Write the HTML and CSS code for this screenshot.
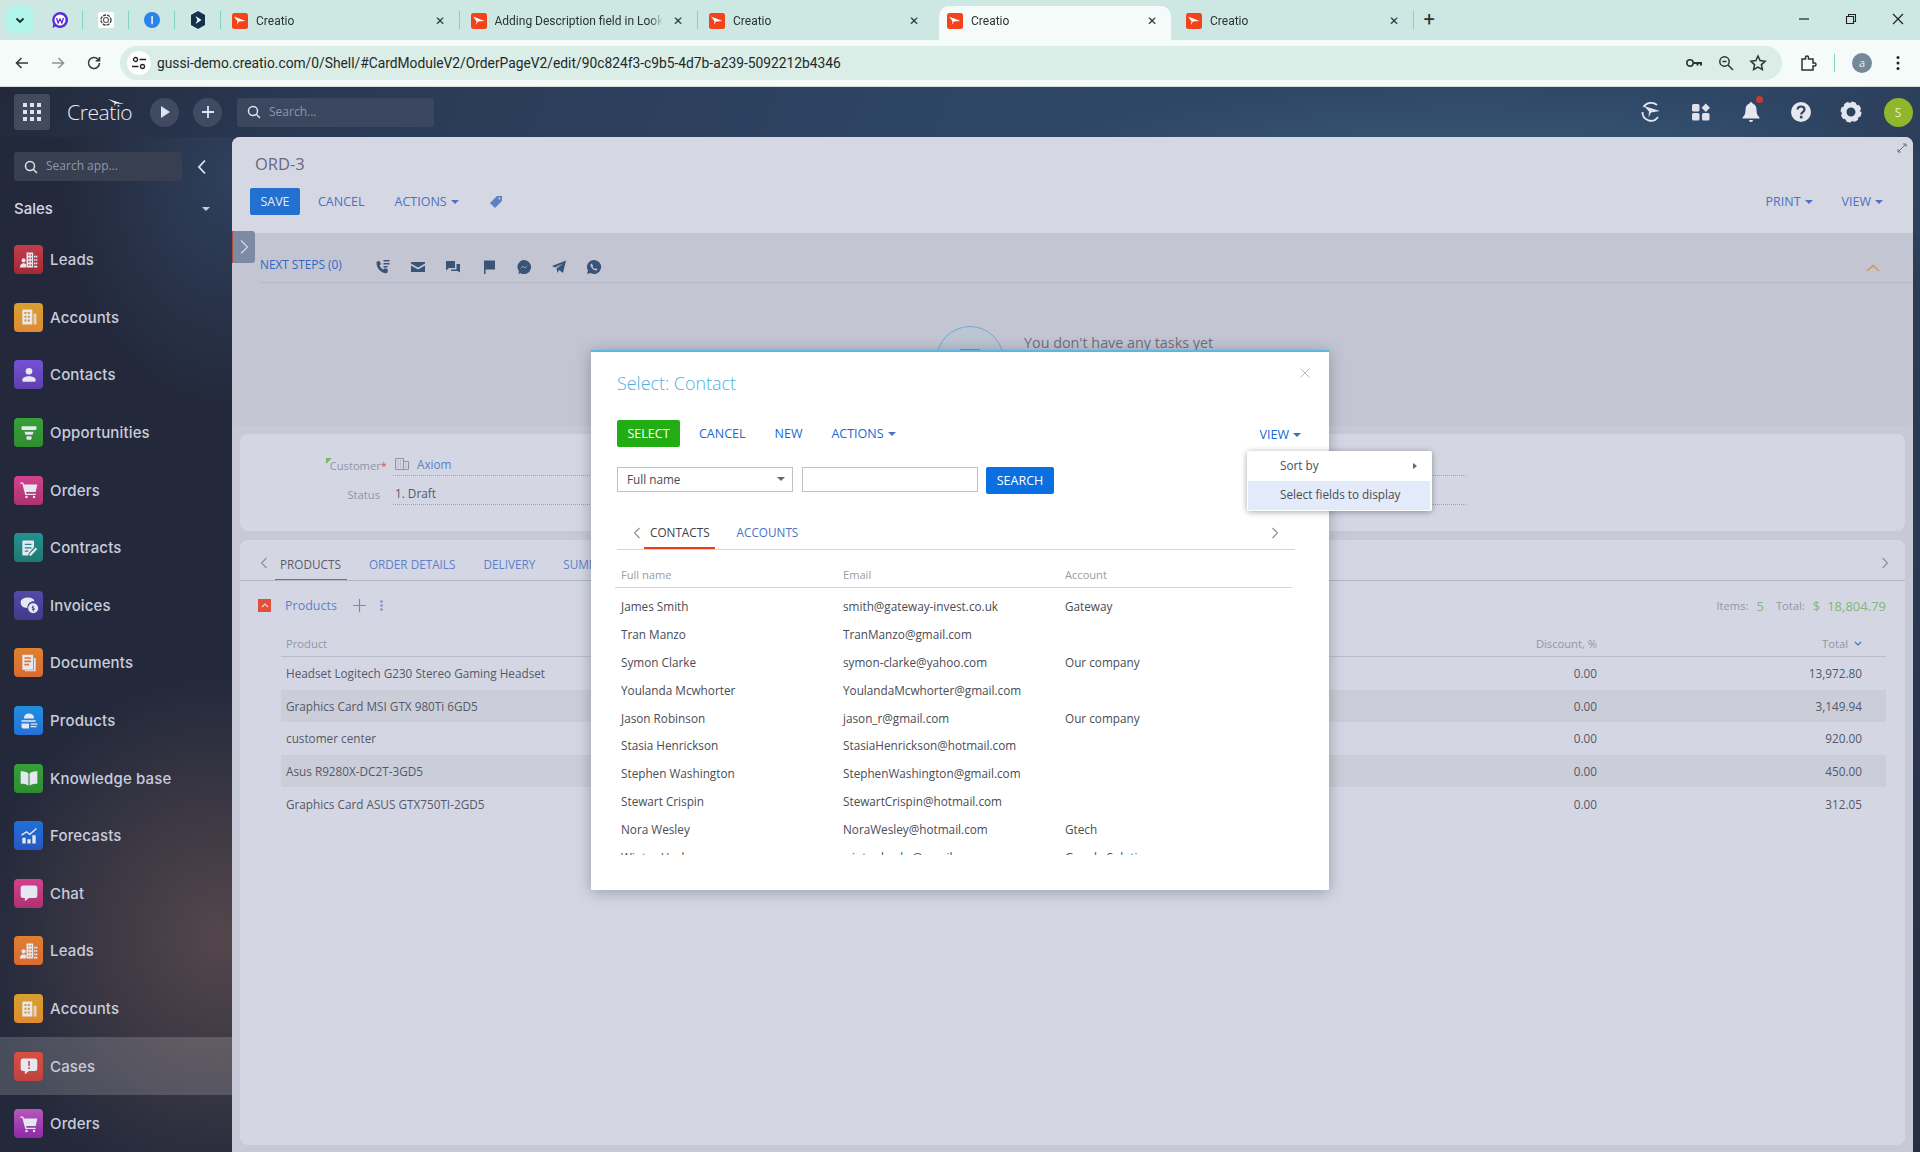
FILE: index.html
```html
<!DOCTYPE html>
<html lang="en">

<head>
  <meta charset="UTF-8">
  <title>Creatio</title>
  <link rel="stylesheet" href="styles.css">
</head>

<body>

  <svg class="sprite" xmlns="http://www.w3.org/2000/svg">
    <symbol id="fav" viewBox="0 0 16 16">
      <rect width="16" height="16" rx="2.5" fill="#f4421a"/>
      <path d="M2 3.5 13.5 8 7 8.6l-2.3 3.4L5.6 8.4z" fill="#fff"/>
    </symbol>
    <symbol id="i-lead" viewBox="0 0 24 24">
      <path fill-rule="evenodd" d="M9 3h8v18H9zM11 5v2h1.5V5zm3 0v2h1.5V5zM11 9v2h1.5V9zm3 0v2h1.5V9zM11 13v2h1.5v-2zm3 0v2h1.5v-2zM11 17v2h1.5v-2zm3 0v2h1.5v-2z"/>
      <path d="M18 7h1.500v2H18zm2 0h2v2h-2zm-2 4h1.500v2H18zm2 0h2v2h-2zm-2 4h1.500v2H18zm2 0h2v2h-2zm-2 4h4v2h-4z"/>
      <circle cx="5.500" cy="12.500" r="2.500"/>
      <path d="M1 21c0-3 2-5 4.500-5S10 18 8 21z"/>
    </symbol>
    <symbol id="i-acc" viewBox="0 0 24 24">
      <path fill-rule="evenodd" d="M4 4a1 1 0 0 1 1-1h10a1 1 0 0 1 1 1v17H4zM6.500 6v2.500H9V6zm4 0v2.500H13V6zm-4 4.500V13H9v-2.500zm4 0V13H13v-2.500zm-4 4.500v2.500H9V15zm4 0v2.500H13V15z"/>
      <path d="M17.500 8H21v13h-3.500z" opacity=".75"/>
    </symbol>
    <symbol id="i-contact" viewBox="0 0 24 24">
      <circle cx="12" cy="7.500" r="4"/>
      <path d="M4 18c0-3 4-4.500 8-4.500s8 1.500 8 4.500v1a1 1 0 0 1-1 1H5a1 1 0 0 1-1-1z"/>
    </symbol>
    <symbol id="i-funnel" viewBox="0 0 24 24">
      <path d="M3 5a1 1 0 0 1 1-1h16a1 1 0 0 1 1 1v1.500a2 2 0 0 1-2 2H5a2 2 0 0 1-2-2zM6.500 10.500h11l-1.300 3.700H7.800zM9 16h6v3a1 1 0 0 1-1 1h-4a1 1 0 0 1-1-1z"/>
    </symbol>
    <symbol id="i-cart" viewBox="0 0 24 24">
      <path d="M1.500 3H5l1 2.500h16L20 14.500H8.500l.5 2H20V18H7.500L4 4.500H1.500z"/>
      <circle cx="9" cy="20.500" r="1.500"/>
      <circle cx="18" cy="20.500" r="1.500"/>
    </symbol>
    <symbol id="i-contract" viewBox="0 0 24 24">
      <path fill-rule="evenodd" d="M5 3h12a1 1 0 0 1 1 1v7l-6 7-1 3H5a1 1 0 0 1-1-1V4a1 1 0 0 1 1-1zm2 4v1.500h8V7zm0 4v1.500h8V11zm0 4v1.500h4V15z"/>
      <path d="m20 11.500 2 1.800-7.500 8H12.500v-2z"/>
    </symbol>
    <symbol id="i-invoice" viewBox="0 0 24 24">
      <path d="M11 3c4 0 7 1.500 7.500 4.500-4.500-.5-8.500 2.500-8.500 8-4.500 0-8-2-8-6.500C2 5 6 3 11 3z"/>
      <path fill-rule="evenodd" d="M17 10a6 6 0 1 1 0 12 6 6 0 0 1 0-12zm-.8 2.500v1.200c-1.200.3-1.500 2.300.3 2.600 1.300.3 1 1.100-.8.700v1.200l1.300.2v1.100h1V18c1.200-.4 1.300-2.300-.4-2.600-1.200-.3-1-1 .6-.6v-1.100l-1-.2v-1z"/>
    </symbol>
    <symbol id="i-doc" viewBox="0 0 24 24">
      <path fill-rule="evenodd" d="M4 2h13v18H4zM6.500 5v2h8V5zm0 4v2h8V9zm0 4v2H12v-2z"/>
      <path d="M18 6h2v16H7v-1.200h11z"/>
    </symbol>
    <symbol id="i-product" viewBox="0 0 24 24">
      <path d="M6 8c0-3 2.500-5 6-5s6 2 6 5v1H6zM3 11h17v2H3zM3 15h9v6H5a2 2 0 0 1-2-2zM14 15h8v1.500h-8zM14 18h7v1.500h-7z"/>
    </symbol>
    <symbol id="i-book" viewBox="0 0 24 24">
      <path d="M2 4c3.500 0 7 .5 9.300 2.500V21C9 19.500 5.500 19 2 19zM22 4c-3.500 0-7 .5-9.300 2.500V21C15 19.500 18.500 19 22 19z"/>
    </symbol>
    <symbol id="i-forecast" viewBox="0 0 24 24">
      <path d="M4 14h4v7H4zM10 16h4v5h-4zM16 11h4v10h-4z"/>
      <path d="m3 11 6-4 4 3 8-7" fill="none" stroke="currentColor" stroke-width="1.600"/>
    </symbol>
    <symbol id="i-chat" viewBox="0 0 24 24">
      <path d="M5 3h14a3 3 0 0 1 3 3v9a3 3 0 0 1-3 3h-7l-5 4v-4H5a3 3 0 0 1-3-3V6a3 3 0 0 1 3-3z"/>
    </symbol>
    <symbol id="i-case" viewBox="0 0 24 24">
      <path d="M5 3h14a3 3 0 0 1 3 3v9a3 3 0 0 1-3 3h-7l-5 4v-4H5a3 3 0 0 1-3-3V6a3 3 0 0 1 3-3z"/>
      <path d="M11 6h2v6h-2zM11 13.500h2v2h-2z" fill="#d34a40"/>
    </symbol>
  </svg>

  <div class="browser">
    <div class="tabstrip">
      <div class="tab-menu">
        <svg width="12" height="12" viewBox="0 0 12 12"><path d="m2.500 4.500 3.500 3.500 3.500-3.500" fill="none" stroke="#1d2b2a" stroke-width="1.800"/></svg>
      </div>
      <div class="pin">
        <svg width="18" height="18" viewBox="0 0 18 18"><path d="M9 1a8 8 0 1 1-4.500 14.600L1.500 17l.8-4A8 8 0 0 1 9 1z" fill="#5b2bd8"/><circle cx="9" cy="9" r="5.500" fill="#fff"/><path d="m5.500 7 1.600 5 1.900-4 1.900 4 1.600-5" fill="none" stroke="#5b2bd8" stroke-width="1.300"/></svg>
      </div>
      <div class="pin">
        <svg width="16" height="16" viewBox="0 0 16 16"><rect width="16" height="16" rx="2" fill="#fff"/><circle cx="8" cy="8" r="5" fill="none" stroke="#444" stroke-width="1.400" stroke-dasharray="3 1"/><circle cx="8" cy="8" r="2.500" fill="none" stroke="#555" stroke-width="1.100"/></svg>
      </div>
      <div class="pin">
        <svg width="16" height="16" viewBox="0 0 16 16"><circle cx="8" cy="8" r="8" fill="#2a83e8"/><path d="M6.500 5 8.800 3.800v8.400H7.400V5.500z" fill="#fff"/></svg>
      </div>
      <div class="pin">
        <svg width="16" height="18" viewBox="0 0 16 18"><path d="M8 0 15 4v10l-7 4-7-4V4z" fill="#14304d"/><path d="m5.500 5 6 4-6 4 2-4z" fill="#fff"/></svg>
      </div>
      <div class="tab"><svg class="fav"><use href="#fav"/></svg><span class="tab-title">Creatio</span><span class="tab-x">&#x2715;</span></div>
      <div class="tab"><svg class="fav"><use href="#fav"/></svg><span class="tab-title">Adding Description field in Look</span><span class="tab-x">&#x2715;</span></div>
      <div class="tab no-sep"><svg class="fav"><use href="#fav"/></svg><span class="tab-title">Creatio</span><span class="tab-x">&#x2715;</span></div>
      <div class="tab active"><svg class="fav"><use href="#fav"/></svg><span class="tab-title">Creatio</span><span class="tab-x">&#x2715;</span></div>
      <div class="tab"><svg class="fav"><use href="#fav"/></svg><span class="tab-title">Creatio</span><span class="tab-x">&#x2715;</span></div>
      <div class="new-tab">+</div>
      <div class="win-controls">
        <svg width="12" height="12" viewBox="0 0 12 12"><path d="M1 6h10" stroke="#222" stroke-width="1.200"/></svg>
        <svg width="12" height="12" viewBox="0 0 12 12"><path d="M1.500 3.500h7v7h-7zM3.500 3.500v-2h7v7h-2" fill="none" stroke="#222" stroke-width="1.100"/></svg>
        <svg width="12" height="12" viewBox="0 0 12 12"><path d="m1 1 10 10M11 1 1 11" stroke="#222" stroke-width="1.200"/></svg>
      </div>
    </div>
    <div class="toolbar">
      <svg class="nav-btn" width="16" height="16" viewBox="0 0 16 16"><path d="M14 8H3M7.500 3 2.500 8l5 5" fill="none" stroke="#2f3d3b" stroke-width="1.600"/></svg>
      <svg class="nav-btn" width="16" height="16" viewBox="0 0 16 16"><path d="M2 8h11M8.500 3l5 5-5 5" fill="none" stroke="#8a9694" stroke-width="1.600"/></svg>
      <svg class="nav-btn" width="16" height="16" viewBox="0 0 16 16"><path d="M13.500 8a5.500 5.500 0 1 1-1.600-3.900L13.500 5.500M13.500 2v3.800H9.700" fill="none" stroke="#2f3d3b" stroke-width="1.600"/></svg>
      <div class="address">
        <span class="site-btn">
          <svg width="16" height="16" viewBox="0 0 16 16"><circle cx="4.500" cy="4.500" r="2" fill="none" stroke="#222" stroke-width="1.300"/><path d="M8.500 4.500H15M1 11.500h6.500" stroke="#222" stroke-width="1.300"/><circle cx="11.500" cy="11.500" r="2" fill="none" stroke="#222" stroke-width="1.300"/></svg>
        </span>
        <span class="url">gussi-demo.creatio.com/0/Shell/#CardModuleV2/OrderPageV2/edit/90c824f3-c9b5-4d7b-a239-5092212b4346</span>
        <span class="addr-icons">
          <svg width="18" height="18" viewBox="0 0 18 18"><circle cx="5" cy="9" r="3.200" fill="none" stroke="#2a3432" stroke-width="1.600"/><path d="M8.500 8H17v3.500h-2V10h-1.500v1.500h-2V10H8.500z" fill="#2a3432"/></svg>
          <svg width="18" height="18" viewBox="0 0 18 18"><circle cx="7.500" cy="7.500" r="4.700" fill="none" stroke="#2a3432" stroke-width="1.500"/><path d="m11 11 5 5M5.500 7.500h4" stroke="#2a3432" stroke-width="1.500"/></svg>
          <svg width="18" height="18" viewBox="0 0 18 18"><path d="m9 2 2.100 4.600 5 .6-3.700 3.400 1 5L9 13.100l-4.400 2.500 1-5L1.900 7.200l5-.6z" fill="none" stroke="#2a3432" stroke-width="1.500"/></svg>
        </span>
      </div>
      <svg class="ext" width="18" height="18" viewBox="0 0 18 18"><path d="M3 5h3.500V3.500a1.500 1.500 0 0 1 3 0V5H14v4h1.500a1.500 1.500 0 0 1 0 3H14v4H3z" fill="none" stroke="#2a3432" stroke-width="1.500"/></svg>
      <span class="tool-sep"></span>
      <span class="profile">a</span>
      <svg class="dots" width="4" height="16" viewBox="0 0 4 16"><circle cx="2" cy="2.500" r="1.500" fill="#222"/><circle cx="2" cy="8" r="1.500" fill="#222"/><circle cx="2" cy="13.500" r="1.500" fill="#222"/></svg>
    </div>
  </div>

  <div class="app">
    <header class="topbar">
      <div class="grid-btn">
        <svg width="18" height="18" viewBox="0 0 18 18" fill="#dfe2ec"><rect x="0" y="0" width="4" height="4"/><rect x="7" y="0" width="4" height="4"/><rect x="14" y="0" width="4" height="4"/><rect x="0" y="7" width="4" height="4"/><rect x="7" y="7" width="4" height="4"/><rect x="14" y="7" width="4" height="4"/><rect x="0" y="14" width="4" height="4"/><rect x="7" y="14" width="4" height="4"/><rect x="14" y="14" width="4" height="4"/></svg>
      </div>
      <div class="logo">Creatio<svg class="swoosh" width="16" height="7" viewBox="0 0 16 7"><path d="M0 0 16 5 8 4.600 6 7 6.500 4z" fill="#eceef4"/></svg></div>
      <div class="round-btn play"><svg width="12" height="14" viewBox="0 0 12 14"><path d="M2 1v12l9-6z" fill="#dfe2ec"/></svg></div>
      <div class="round-btn plus"><svg width="14" height="14" viewBox="0 0 14 14"><path d="M7 1v12M1 7h12" stroke="#dfe2ec" stroke-width="1.800"/></svg></div>
      <div class="search-box top-search">
        <svg width="14" height="14" viewBox="0 0 14 14"><circle cx="6" cy="6" r="4.500" fill="none" stroke="#dfe2ec" stroke-width="1.500"/><path d="m9.500 9.500 3.500 3.500" stroke="#dfe2ec" stroke-width="1.500"/></svg>
        <span>Search...</span>
      </div>
      <div class="top-icons">
        <svg width="22" height="22" viewBox="0 0 22 22"><path d="M3.500 6A9 9 0 0 1 17 4M2.500 11a8.500 8.500 0 0 0 15.500 5" fill="none" stroke="#e3e5ee" stroke-width="1.800"/><path d="M4 5l16 5-9 1.500-2.500 5L9 10.500z" fill="#e3e5ee"/></svg>
        <svg width="20" height="20" viewBox="0 0 20 20" fill="#dfe2ec"><rect x="1" y="2" width="7.500" height="7.500" rx="1.500"/><rect x="1" y="11" width="7.500" height="7.500" rx="1.500"/><rect x="11" y="11" width="7.500" height="7.500" rx="1.500"/><path d="m14.800 1.500 4.200 4.200-4.200 4.200-4.200-4.200z"/></svg>
        <span class="bell">
          <svg width="20" height="22" viewBox="0 0 20 22" fill="#e6e8f0"><path d="M10 1a1.500 1.500 0 0 1 1.500 1.500C14.500 3.500 15.500 6 15.500 9c0 4 1 5.500 3 7.500v1h-17v-1c2-2 3-3.500 3-7.500 0-3 1-5.500 4-6.500A1.500 1.500 0 0 1 10 1z"/><path d="M8 19h4a2 2 0 0 1-4 0z"/></svg>
          <i class="bell-dot"></i>
        </span>
        <svg width="22" height="22" viewBox="0 0 22 22"><circle cx="11" cy="11" r="10" fill="#e6e8f0"/><path d="M7.600 8.500C7.800 6.400 9.300 5.500 11 5.500c2 0 3.500 1.200 3.500 3 0 2.700-3.300 2.500-3.300 5" fill="none" stroke="#2f4560" stroke-width="2.200"/><rect x="9.900" y="14.800" width="2.600" height="2.600" fill="#2f4560"/></svg>
        <svg width="22" height="22" viewBox="0 0 22 22"><circle cx="11" cy="11" r="7" fill="none" stroke="#e3e5ee" stroke-width="5"/><circle cx="11" cy="11" r="9" fill="none" stroke="#e3e5ee" stroke-width="3" stroke-dasharray="4.500 2.570"/></svg>
        <span class="user-badge">S</span>
      </div>
    </header>

    <aside class="sidebar">
      <div class="side-search">
        <div class="search-box">
          <svg width="14" height="14" viewBox="0 0 14 14"><circle cx="6" cy="6" r="4.500" fill="none" stroke="#dfe2ec" stroke-width="1.500"/><path d="m9.500 9.500 3.500 3.500" stroke="#dfe2ec" stroke-width="1.500"/></svg>
          <span>Search app...</span>
        </div>
        <svg width="10" height="16" viewBox="0 0 10 16"><path d="M8 1.500 2 8l6 6.500" fill="none" stroke="#e3e5ee" stroke-width="1.800"/></svg>
      </div>
      <div class="side-title"><span>Sales</span><i class="caret light"></i></div>
      <nav class="side-nav">
        <a class="side-item"><span class="ico c-red"><svg><use href="#i-lead"/></svg></span>Leads</a>
        <a class="side-item"><span class="ico c-amber"><svg><use href="#i-acc"/></svg></span>Accounts</a>
        <a class="side-item"><span class="ico c-violet"><svg><use href="#i-contact"/></svg></span>Contacts</a>
        <a class="side-item"><span class="ico c-green"><svg><use href="#i-funnel"/></svg></span>Opportunities</a>
        <a class="side-item"><span class="ico c-pink"><svg><use href="#i-cart"/></svg></span>Orders</a>
        <a class="side-item"><span class="ico c-teal"><svg><use href="#i-contract"/></svg></span>Contracts</a>
        <a class="side-item"><span class="ico c-indigo"><svg><use href="#i-invoice"/></svg></span>Invoices</a>
        <a class="side-item"><span class="ico c-orange"><svg><use href="#i-doc"/></svg></span>Documents</a>
        <a class="side-item"><span class="ico c-blue"><svg><use href="#i-product"/></svg></span>Products</a>
        <a class="side-item"><span class="ico c-green"><svg><use href="#i-book"/></svg></span>Knowledge base</a>
        <a class="side-item"><span class="ico c-royal"><svg><use href="#i-forecast"/></svg></span>Forecasts</a>
        <a class="side-item"><span class="ico c-pink"><svg><use href="#i-chat"/></svg></span>Chat</a>
        <a class="side-item"><span class="ico c-orange"><svg><use href="#i-lead"/></svg></span>Leads</a>
        <a class="side-item"><span class="ico c-amber"><svg><use href="#i-acc"/></svg></span>Accounts</a>
        <a class="side-item current"><span class="ico c-coral"><svg><use href="#i-case"/></svg></span>Cases</a>
        <a class="side-item"><span class="ico c-purple"><svg><use href="#i-cart"/></svg></span>Orders</a>
      </nav>
    </aside>

    <main class="panel">
      <svg class="expand" width="10" height="10" viewBox="0 0 10 10"><path d="M1 9 9 1M6 1h3v3M1 6v3h3" fill="none" stroke="#6d7080" stroke-width="1"/></svg>
      <section class="page-head">
        <h1 class="page-title">ORD-3</h1>
        <div class="actions">
          <button class="btn btn-save">SAVE</button>
          <a class="link cancel-link">CANCEL</a>
          <a class="link actions-link">ACTIONS<i class="caret"></i></a>
          <svg class="tag" width="14" height="14" viewBox="0 0 14 14"><path d="M8 1h5v5l-7 7-5-5z" fill="#5e7fc4"/><circle cx="10.500" cy="3.500" r="1" fill="#d5d7e3"/></svg>
          <span class="spacer"></span>
          <a class="link">PRINT<i class="caret"></i></a>
          <a class="link view-link">VIEW<i class="caret"></i></a>
        </div>
      </section>

      <section class="next-steps">
        <div class="toggle"><svg width="10" height="16" viewBox="0 0 10 16"><path d="m2 1.500 6.500 6.500L2 14.500" fill="none" stroke="#d5d7e3" stroke-width="1.200"/></svg></div>
        <div class="steps-bar">
          <a class="steps-link">NEXT STEPS (0)</a>
          <div class="step-icons">
            <svg viewBox="0 0 16 16"><path d="M2 2.500 4.500 2l1.500 3-1.500 1.500c.7 1.800 2 3.200 4 4l1.500-1.500 3 1.500-.5 2.800c-.2.700-.8 1-1.500 1C6 14 1.500 9 1.500 4c0-.7 0-1.300.5-1.500zM8.500 1h6v1.500h-6zM8.500 4h6v1.500h-6zM8.500 7h4v1.500h-4z"/></svg>
            <svg viewBox="0 0 16 16"><path d="M1 3h14v1.500L8 8.500 1 4.500zM1 6.500l7 4 7-4V13H1z"/></svg>
            <svg viewBox="0 0 16 16"><path d="M1 2h9v7H4l-3 2.500zM11.500 5H15v8.500L12.500 12H6v-1.500h5.500z"/></svg>
            <svg viewBox="0 0 16 16"><path d="M3 1.500h11v9H4.500V15H3z"/></svg>
            <svg viewBox="0 0 16 16"><path fill-rule="evenodd" d="M8 1a7 7 0 1 1-3.200 13.200L2.500 15l.4-2.800A7 7 0 0 1 8 1zM3.800 10l3-3 2 1.500L12 6l-3 3.200L7 7.700z"/></svg>
            <svg viewBox="0 0 16 16"><path d="M15 1.500 12 14 8 11l-1.500 3-1-4.500L12 4.500 4 8.500 1 7z"/></svg>
            <svg viewBox="0 0 16 16"><path fill-rule="evenodd" d="M8 1a7 7 0 1 1-3.500 13L1 15l1-3.400A7 7 0 0 1 8 1zM5.500 4.500 4.500 5.500c0 3 3 6 6 6l1-1.300-2-1-.8.800c-1-.5-1.800-1.300-2.200-2.200l.8-.8z"/></svg>
          </div>
          <svg class="steps-collapse" width="14" height="8" viewBox="0 0 14 8"><path d="m1 7 6-5.500L13 7" fill="none" stroke="#d8924a" stroke-width="1.300"/></svg>
        </div>
        <div class="no-tasks">
          <span class="no-tasks-circle"><i></i></span>
          <span class="no-tasks-text">You don't have any tasks yet</span>
        </div>
      </section>

      <section class="card customer-card">
        <div class="field">
          <label class="field-label"><i class="flag"></i>Customer<b>*</b></label>
          <div class="field-value">
            <svg width="14" height="12" viewBox="0 0 14 12"><path d="M.5.500h8v11h-8zM8.500 3.500h5v8h-5M2.500 3h1M5 3h1M2.500 6h1M5 6h1M2.500 9h1M5 9h1M10.500 6h1M10.500 9h1" fill="none" stroke="#8f92a2" stroke-width="1"/></svg>
            <a class="axiom">Axiom</a>
          </div>
        </div>
        <div class="field">
          <label class="field-label">Status</label>
          <div class="field-value">1. Draft</div>
        </div>
      </section>

      <section class="card products-card">
        <div class="tabs">
          <svg class="tabs-arrow" width="8" height="12" viewBox="0 0 8 12"><path d="M6.500 1 1.500 6l5 5" fill="none" stroke="#8a8d9c" stroke-width="1.100"/></svg>
          <a class="tab-link selected">PRODUCTS</a>
          <a class="tab-link">ORDER DETAILS</a>
          <a class="tab-link">DELIVERY</a>
          <a class="tab-link">SUMMARY</a>
          <span class="spacer"></span>
          <svg class="tabs-arrow" width="8" height="12" viewBox="0 0 8 12"><path d="m1.500 1 5 5-5 5" fill="none" stroke="#8a8d9c" stroke-width="1.100"/></svg>
        </div>
        <div class="detail-head">
          <span class="collapse-btn"><svg width="8" height="5" viewBox="0 0 8 5"><path d="m1 4 3-3 3 3" fill="none" stroke="#f3d6d0" stroke-width="1.200"/></svg></span>
          <span class="detail-name">Products</span>
          <svg width="13" height="13" viewBox="0 0 13 13"><path d="M6.500 0v13M0 6.500h13" stroke="#6d8ad0" stroke-width="1.200"/></svg>
          <svg class="detail-more" width="3" height="11" viewBox="0 0 3 11" fill="#6d8ad0"><circle cx="1.500" cy="1.500" r="1.200"/><circle cx="1.500" cy="5.500" r="1.200"/><circle cx="1.500" cy="9.500" r="1.200"/></svg>
          <span class="spacer"></span>
          <span class="sum-label">Items:</span><span class="sum-num items-num">5</span>
          <span class="sum-label">Total:</span><span class="sum-num">$</span><span class="sum-num sum-amount">18,804.79</span>
        </div>
        <div class="grid-row grid-header">
          <span>Product</span>
          <span class="num">Discount, %</span>
          <span class="num">Total<svg class="sort" width="8" height="5" viewBox="0 0 8 5"><path d="m1 1 3 3 3-3" fill="none" stroke="#4a6fc0" stroke-width="1.200"/></svg></span>
        </div>
        <div class="grid-row"><span>Headset Logitech G230 Stereo Gaming Headset</span><span class="num">0.00</span><span class="num">13,972.80</span></div>
        <div class="grid-row odd"><span>Graphics Card MSI GTX 980Ti 6GD5</span><span class="num">0.00</span><span class="num">3,149.94</span></div>
        <div class="grid-row"><span>customer center</span><span class="num">0.00</span><span class="num">920.00</span></div>
        <div class="grid-row odd"><span>Asus R9280X-DC2T-3GD5</span><span class="num">0.00</span><span class="num">450.00</span></div>
        <div class="grid-row"><span>Graphics Card ASUS GTX750TI-2GD5</span><span class="num">0.00</span><span class="num">312.05</span></div>
      </section>
    </main>

    <div class="modal">
      <svg class="modal-close" width="10" height="10" viewBox="0 0 10 10"><path d="m.5.500 9 9M9.500.500l-9 9" stroke="#b9bbc2" stroke-width="1"/></svg>
      <h2 class="modal-title">Select: Contact</h2>
      <div class="modal-actions">
        <button class="btn btn-select">SELECT</button>
        <a class="mlink">CANCEL</a>
        <a class="mlink">NEW</a>
        <a class="mlink">ACTIONS<i class="caret"></i></a>
        <span class="spacer"></span>
        <a class="mlink view-btn">VIEW<i class="caret dark"></i></a>
      </div>
      <div class="filter-row">
        <div class="combo"><span>Full name</span><i class="caret grey"></i></div>
        <div class="combo text-input"></div>
        <button class="btn btn-search">SEARCH</button>
      </div>
      <div class="modal-tabs">
        <svg width="8" height="12" viewBox="0 0 8 12"><path d="M6.500 1 1.500 6l5 5" fill="none" stroke="#8a8d9c" stroke-width="1.100"/></svg>
        <a class="mtab selected">CONTACTS</a>
        <a class="mtab">ACCOUNTS</a>
        <span class="spacer"></span>
        <svg width="8" height="12" viewBox="0 0 8 12"><path d="m1.500 1 5 5-5 5" fill="none" stroke="#8a8d9c" stroke-width="1.100"/></svg>
      </div>
      <div class="mgrid-head"><span>Full name</span><span>Email</span><span>Account</span></div>
      <div class="mgrid">
        <div class="mrow"><span>James Smith</span><span>smith@gateway-invest.co.uk</span><span>Gateway</span></div>
        <div class="mrow"><span>Tran Manzo</span><span>TranManzo@gmail.com</span><span></span></div>
        <div class="mrow"><span>Symon Clarke</span><span>symon-clarke@yahoo.com</span><span>Our company</span></div>
        <div class="mrow"><span>Youlanda Mcwhorter</span><span>YoulandaMcwhorter@gmail.com</span><span></span></div>
        <div class="mrow"><span>Jason Robinson</span><span>jason_r@gmail.com</span><span>Our company</span></div>
        <div class="mrow"><span>Stasia Henrickson</span><span>StasiaHenrickson@hotmail.com</span><span></span></div>
        <div class="mrow"><span>Stephen Washington</span><span>StephenWashington@gmail.com</span><span></span></div>
        <div class="mrow"><span>Stewart Crispin</span><span>StewartCrispin@hotmail.com</span><span></span></div>
        <div class="mrow"><span>Nora Wesley</span><span>NoraWesley@hotmail.com</span><span>Gtech</span></div>
        <div class="mrow"><span>Winter Hacks</span><span>winter.hacks@gmail.com</span><span>Google Solutions</span></div>
      </div>
    </div>

    <div class="view-menu">
      <div class="menu-item">Sort by<i class="menu-arrow"></i></div>
      <div class="menu-item hover">Select fields to display</div>
    </div>
  </div>

</body>

</html>
```

FILE: styles.css
```css
* {
  box-sizing: border-box;
}

html,
body {
  margin: 0;
  padding: 0;
  height: 100%;
  overflow: hidden;
}

body {
  font-family: "Open Sans", Arial, sans-serif;
  font-size: 11.75px;
  color: #55586a;
  background: #23293b;
}

.sprite {
  display: none;
}

.spacer {
  flex: 1;
}

i {
  display: inline-block;
}

/* browser chrome */

.tabstrip {
  height: 40px;
  background: #cde8e2;
  display: flex;
  align-items: center;
  font-family: Roboto, Arial, sans-serif;
  font-size: 12px;
  color: #2a3432;
  padding-left: 6px;
}

.tab-menu {
  width: 28px;
  height: 28px;
  border-radius: 9px;
  background: #b2f5ea;
  display: flex;
  align-items: center;
  justify-content: center;
  margin-right: 3px;
}

.pin {
  width: 46px;
  height: 18px;
  display: flex;
  align-items: center;
  justify-content: center;
  border-right: 1px solid #83d4c6;
}

.tab {
  width: 238.5px;
  height: 34px;
  margin-top: 6px;
  padding: 0 11px 4px 11px;
  display: flex;
  align-items: center;
  position: relative;
  flex: none;
}

.tab::after {
  content: "";
  position: absolute;
  right: 0;
  top: 5px;
  height: 18px;
  border-right: 1px solid #83d4c6;
}

.tab.no-sep {
  width: 236px;
}

.tab.no-sep::after,
.tab.active::after {
  display: none;
}

.tab.active {
  width: 232px;
  margin: 6px 4px 0 5px;
  padding: 0 10px 4px 8px;
  background: #f5fbf8;
  border-radius: 10px 10px 0 0;
}

.fav {
  width: 16px;
  height: 16px;
  flex: none;
}

.tab-title {
  flex: 1;
  margin-left: 8px;
  white-space: nowrap;
  overflow: hidden;
  mask-image: linear-gradient(to right, #000 92%, transparent 100%);
}

.tab-x {
  width: 16px;
  font-size: 12px;
  text-align: center;
  flex: none;
  margin-left: 7px;
  margin-right: 1px;
}

.new-tab {
  font-size: 20px;
  font-weight: 400;
  margin-left: 10px;
  margin-top: -2px;
}

.win-controls {
  margin-left: auto;
  width: 116px;
  display: flex;
  gap: 35px;
  margin-right: 6px;
  margin-top: -2px;
}

.toolbar {
  height: 47px;
  background: #f5fbf8;
  border-bottom: 1px solid #d5dcd9;
  display: flex;
  align-items: center;
  padding: 0 0 0 14px;
}

.nav-btn {
  margin-right: 20px;
  margin-top: -1px;
}

.nav-btn:nth-child(3) {
  margin-right: 18px;
}

.address {
  width: 1662px;
  height: 34px;
  margin-top: -1px;
  border-radius: 17px;
  background: #daede7;
  display: flex;
  align-items: center;
  padding: 0 15px 0 7px;
}

.site-btn {
  width: 24px;
  height: 24px;
  border-radius: 50%;
  background: #fff;
  display: flex;
  align-items: center;
  justify-content: center;
}

.url {
  flex: 1;
  margin-left: 6px;
  font-family: Roboto, Arial, sans-serif;
  font-size: 13.8px;
  color: #1f2928;
}

.addr-icons {
  display: flex;
  gap: 14px;
}

.ext {
  margin-left: 17px;
}

.tool-sep {
  width: 1px;
  height: 18px;
  background: #83d4c6;
  margin-left: 17px;
}

.profile {
  width: 20px;
  height: 20px;
  border-radius: 50%;
  background: #72899b;
  color: #e8eef0;
  font-size: 11px;
  text-align: center;
  line-height: 19px;
  margin-left: 17px;
}

.dots {
  margin-left: 24px;
}

/* app shell */

.app {
  position: relative;
  height: 1065px;
  display: grid;
  grid-template-columns: 232px 1681px;
  grid-template-rows: 50px 1015px;
  background:
    radial-gradient(ellipse 500px 130px at 1480px 120px, #3f5d7d 0%, rgba(63, 93, 125, 0) 100%),
    linear-gradient(115deg, #23293b 0%, #2a3a55 14%, #2f4767 45%, #2e4665 72%, #272e42 100%);
  background-color: #23293b;
}

.sidebar {
  background:
    radial-gradient(ellipse 240px 260px at 220px 800px, #54464c 0%, rgba(84, 70, 76, 0) 100%),
    radial-gradient(ellipse 170px 230px at 232px 40px, #2e405c 0%, rgba(46, 64, 92, 0) 100%),
    #23293b;
}

.topbar {
  grid-column: 1 / 3;
  display: flex;
  align-items: center;
  padding-left: 14px;
  margin-right: -7px;
}

.grid-btn {
  width: 36px;
  height: 36px;
  border-radius: 3px;
  background: #424b5e;
  display: flex;
  align-items: center;
  justify-content: center;
}

.logo {
  position: relative;
  width: 83px;
  margin-left: 17px;
  font-weight: 300;
  font-size: 21px;
  letter-spacing: -.4px;
  color: #eceef4;
}

.swoosh {
  position: absolute;
  left: 41px;
  top: 1px;
}

.round-btn {
  width: 29px;
  height: 29px;
  border-radius: 50%;
  background: #3f4b62;
  display: flex;
  align-items: center;
  justify-content: center;
}

.plus {
  margin-left: 14px;
}

.search-box {
  height: 29px;
  border-radius: 3px;
  background: #3a475e;
  display: flex;
  align-items: center;
  gap: 8px;
  padding-left: 10px;
  color: #8d97aa;
  font-size: 12px;
}

.search-box span {
  margin-top: -2px;
}

.top-search {
  width: 197px;
  margin-left: 15px;
}

.top-icons {
  margin-left: auto;
  display: grid;
  grid-template-columns: repeat(5, 50px) 44px;
  justify-items: center;
  align-items: center;
}

.bell {
  position: relative;
  display: flex;
}

.bell-dot {
  position: absolute;
  top: -5px;
  right: -2px;
  width: 7px;
  height: 7px;
  border-radius: 50%;
  background: #c43d32;
}

.user-badge {
  width: 29px;
  height: 29px;
  border-radius: 50%;
  background: #8fb62c;
  color: #e6efc8;
  text-align: center;
  line-height: 29px;
  font-size: 12px;
}

/* sidebar */

.side-search {
  display: flex;
  align-items: center;
  padding: 15px 0 0 14px;
}

.side-search .search-box {
  width: 168px;
  background: #383f50;
}

.side-search svg:last-child {
  margin-left: 15px;
}

.side-title {
  height: 29px;
  margin-top: 13px;
  padding: 0 22px 0 14px;
  display: flex;
  align-items: center;
  justify-content: space-between;
  font-family: Inter, Arial, sans-serif;
  font-weight: 500;
  font-size: 15px;
  color: #d5d8e4;
}

.side-nav {
  margin-top: 8px;
  display: flex;
  flex-direction: column;
}

.side-item {
  height: 57.6px;
  flex: none;
  padding-left: 14px;
  display: flex;
  align-items: center;
  gap: 7px;
  font-family: Inter, Arial, sans-serif;
  font-weight: 500;
  font-size: 15px;
  letter-spacing: .15px;
  color: #c9ccdc;
}

.side-item.current {
  background: rgba(255, 255, 255, .17);
}

.ico {
  width: 29px;
  height: 29px;
  border-radius: 4px;
  display: flex;
  align-items: center;
  justify-content: center;
  color: #e6e8f1;
}

.ico svg {
  width: 20px;
  height: 20px;
  fill: currentColor;
}

.c-red { background: linear-gradient(#c23d4c, #a42933); }
.c-amber { background: linear-gradient(#d7a030, #e08a30); }
.c-violet { background: linear-gradient(#7452d6, #603fae); }
.c-green { background: linear-gradient(#37a038, #2f8d31); }
.c-pink { background: linear-gradient(#d2428c, #ad3272); }
.c-teal { background: linear-gradient(#219291, #1f7970); }
.c-indigo { background: linear-gradient(#534aab, #413989); }
.c-orange { background: linear-gradient(#de8032, #d96b30); }
.c-blue { background: linear-gradient(#2090e0, #2570d8); }
.c-royal { background: linear-gradient(#2070d8, #2558c0); }
.c-coral { background: linear-gradient(#d85040, #bf4242); }
.c-purple { background: linear-gradient(#b458bb, #8f28a8); }

/* main panel */

.panel {
  position: relative;
  background: #c7cad6;
  border-radius: 8px 8px 0 0;
  overflow: hidden;
}

.expand {
  position: absolute;
  right: 6px;
  top: 6px;
}

.page-head {
  height: 96px;
  background: #d5d7e3;
  padding: 17px 0 0 18px;
}

.page-title {
  margin: 0 0 0 5px;
  height: 21px;
  font-size: 16.5px;
  line-height: 20px;
  font-weight: 400;
  color: #686a7b;
}

.actions {
  display: flex;
  align-items: center;
  margin-top: 13px;
  padding-right: 30px;
  height: 27px;
}

.btn {
  border: none;
  border-radius: 2px;
  color: #fff;
  font-family: inherit;
  font-size: 12.5px;
  padding: 0;
  height: 27px;
}

.btn-save {
  width: 50px;
  background: #2270d0;
  color: #e6ecf6;
}

.link {
  color: #4a71c4;
  font-size: 12.5px;
}

.cancel-link {
  margin-left: 18px;
}

.actions-link {
  margin-left: 30px;
}

.view-link {
  margin-left: 29px;
}

.tag {
  margin-left: 30px;
}

.caret {
  width: 0;
  height: 0;
  border-left: 4px solid transparent;
  border-right: 4px solid transparent;
  border-top: 4px solid #4a71c4;
  margin-left: 4px;
  vertical-align: 2px;
}

.caret.light {
  border-top-color: #c9ccdc;
}

.caret.dark {
  border-top-color: #3a6fc0;
}

.caret.grey {
  border-top-color: #666;
}

.next-steps {
  position: relative;
  height: 193px;
  background: #c3c6d2;
  border-radius: 0 0 8px 8px;
}

.toggle {
  position: absolute;
  left: 0;
  top: -2px;
  width: 23px;
  height: 32px;
  background: #7c8aa3;
  border-radius: 0 3px 3px 0;
  border-left: 1px solid #b0493d;
  display: flex;
  align-items: center;
  justify-content: center;
}

.steps-bar {
  height: 50px;
  margin-left: 28px;
  padding-right: 33px;
  padding-top: 13px;
  border-bottom: 1px solid #b6b9c6;
  display: flex;
  align-items: center;
}

.steps-link {
  width: 114px;
  color: #2f66c8;
  font-size: 11.8px;
}

.step-icons {
  flex: 1;
  display: flex;
  gap: 19.2px;
  margin: 5px 0 0 1px;
}

.step-icons svg {
  width: 16px;
  height: 16px;
  fill: #3a5478;
}

.steps-collapse {
  margin-top: 8px;
}

.no-tasks {
  display: flex;
  gap: 20px;
  margin: 43px 0 0 704px;
  height: 60px;
  color: #6d7080;
}

.no-tasks-text {
  font-size: 14.35px;
  margin-top: 7px;
}

.no-tasks-circle {
  position: relative;
  width: 68px;
  height: 68px;
  border-radius: 50%;
  border: 1px solid #6cacd8;
  background: #bcc5d2;
  flex: none;
}

.no-tasks-circle i {
  position: absolute;
  left: 23px;
  top: 22px;
  width: 20px;
  height: 2px;
  background: #5a9ed0;
}

.card {
  margin: 8px 8px 0;
  background: #d4d7e3;
  border-radius: 8px;
}

.customer-card {
  height: 97px;
  padding-top: 20px;
}

.field {
  height: 29px;
  display: flex;
}

.field-label {
  position: relative;
  width: 140px;
  text-align: right;
  font-size: 11.2px;
  color: #9295a4;
  padding-top: 4px;
}

.field-label b {
  color: #d9534f;
  font-weight: 400;
  margin-right: -7px;
}

.flag {
  position: absolute;
  left: 86px;
  top: 4px;
  width: 0;
  height: 0;
  border-top: 6px solid #78b860;
  border-right: 6px solid transparent;
}

.field-value {
  width: 1073px;
  margin-left: 13px;
  height: 22px;
  padding: 0 0 1px 2px;
  border-bottom: 1px dotted #9da0ae;
  display: flex;
  align-items: center;
  gap: 8px;
  color: #55586a;
}

.axiom {
  color: #5d7fc9;
}

.products-card {
  height: 605px;
  margin-top: 9px;
}

.tabs {
  height: 41px;
  padding: 6px 16px 0 20px;
  border-bottom: 1px solid #b4b7c5;
  display: flex;
  align-items: center;
  overflow: hidden;
}

.tab-link {
  margin-left: 28px;
  height: 34px;
  line-height: 36px;
  color: #5d7fc9;
  position: relative;
}

.tab-link.selected {
  margin-left: 12px;
  color: #5a5c6c;
}

.tab-link.selected::after {
  content: "";
  position: absolute;
  left: -5px;
  right: -6px;
  bottom: -1px;
  height: 2px;
  background: #e04a30;
}

.detail-head {
  height: 49px;
  padding: 0 19px 0 18px;
  display: flex;
  align-items: center;
}

.collapse-btn {
  width: 13px;
  height: 13px;
  background: #e2503a;
  display: flex;
  align-items: center;
  justify-content: center;
}

.detail-name {
  margin: 0 16px 0 14px;
  color: #5d7fc9;
  font-size: 12.5px;
}

.detail-more {
  margin-left: 14px;
}

.sum-label {
  color: #9295a4;
  font-size: 11.2px;
  margin-left: 12px;
}

.sum-num {
  color: #85b57a;
  font-size: 13px;
  margin-left: 8px;
}

.sum-amount {
  margin-left: 7px;
}

.grid-row {
  display: grid;
  grid-template-columns: 1fr 130px 265px;
  align-items: center;
  height: 32.6px;
  margin: 0 19px 0 41px;
  padding: 0 24px 0 5px;
}

.grid-row.odd {
  background: #cbced9;
}

.grid-header {
  height: 27px;
  padding-top: 6px;
  color: #9295a4;
  font-size: 11.2px;
  border-bottom: 1px solid #b9bcc9;
  align-items: start;
}

.num {
  text-align: right;
}

.sort {
  margin: 0 0 2px 6px;
}

/* select modal */

.modal {
  position: absolute;
  left: 591px;
  top: 263px;
  width: 738px;
  height: 540px;
  background: #fff;
  border-top: 2px solid #5bb6e3;
  box-shadow: 0 2px 14px rgba(40, 44, 60, .35);
  padding: 0 34px 0 26px;
  color: #4a4c55;
}

.modal-close {
  position: absolute;
  right: 19px;
  top: 16px;
}

.modal-title {
  margin: 19px 0 0;
  height: 24px;
  line-height: 24px;
  font-size: 17.9px;
  font-weight: 300;
  color: #4db0df;
}

.modal-actions {
  display: flex;
  align-items: center;
  height: 27px;
  margin-top: 25px;
  gap: 19px;
}

.btn-select {
  width: 63px;
  background: #22ad14;
}

.mlink {
  color: #1669d6;
  font-size: 12.5px;
}

.mlink + .mlink {
  margin-left: 10px;
}

.view-btn {
  margin: 2px -6px 0 0;
}

.filter-row {
  display: flex;
  align-items: flex-start;
  gap: 9px;
  margin-top: 20px;
}

.combo {
  width: 176px;
  height: 25px;
  border: 1px solid #c0c1c5;
  display: flex;
  align-items: center;
  justify-content: space-between;
  padding: 0 7px 1px 9px;
}

.btn-search {
  width: 68px;
  margin-left: -1px;
  background: #0a6fe0;
}

.modal-tabs {
  display: flex;
  align-items: center;
  height: 37px;
  margin-top: 19px;
  padding: 4px 16px 0 16px;
  border-bottom: 1px solid #d4d5d8;
}

.mtab {
  position: relative;
  color: #4a71c4;
  margin-left: 27px;
  height: 36px;
  margin-top: -4px;
  line-height: 38px;
}

.mtab.selected {
  margin-left: 9px;
  color: #3e4048;
}

.mtab.selected::after {
  content: "";
  position: absolute;
  left: -6px;
  right: -5px;
  bottom: 0;
  height: 2px;
  background: #f03c14;
}

.mgrid-head,
.mrow {
  display: grid;
  grid-template-columns: 222px 222px 1fr;
  padding-left: 6px;
}

.mgrid-head {
  height: 38px;
  margin: 0 3px 0 -2px;
  padding-top: 17px;
  font-size: 11.1px;
  color: #9a9ca4;
  border-bottom: 1px solid #d4d5d8;
}

.mgrid {
  height: 267px;
  overflow: hidden;
  padding-top: 4px;
  margin-left: -2px;
}

.mrow {
  height: 27.9px;
  align-items: center;
}

/* view dropdown */

.view-menu {
  position: absolute;
  left: 1247px;
  top: 364px;
  width: 185px;
  height: 60px;
  background: #fff;
  border-radius: 2px;
  box-shadow: 0 1px 6px rgba(0, 0, 0, .35);
  padding: 0 2px 0 1px;
  color: #4a4c55;
}

.menu-item {
  position: relative;
  height: 29.5px;
  padding: 0 0 2px 32px;
  display: flex;
  align-items: center;
}

.menu-item.hover {
  background: #e3eaf9;
}

.menu-arrow {
  position: absolute;
  right: 13px;
  top: 12px;
  border-left: 4px solid #666;
  border-top: 3px solid transparent;
  border-bottom: 3px solid transparent;
}
```
